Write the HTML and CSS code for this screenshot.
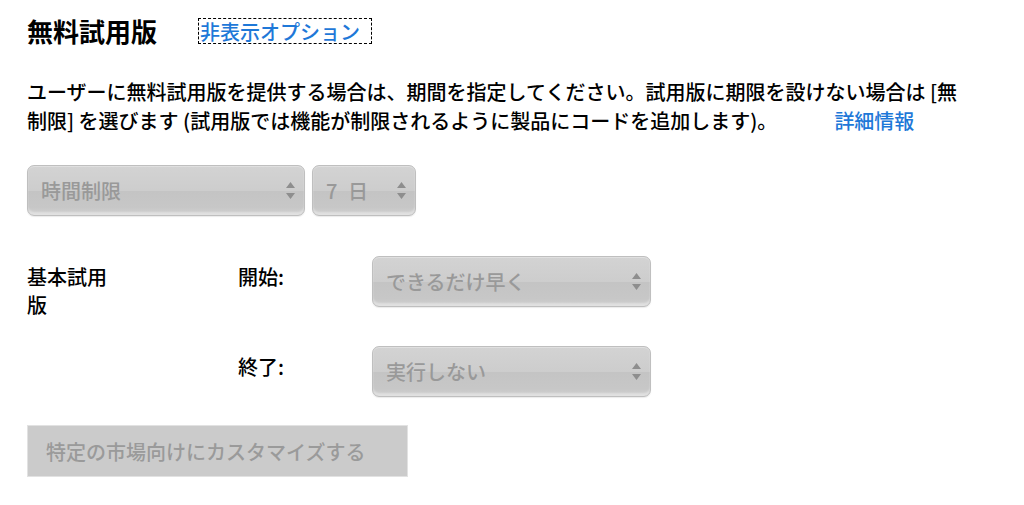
FILE: index.html
```html
<!DOCTYPE html>
<html lang="ja">
<head>
<meta charset="utf-8">
<link rel="stylesheet" href="styles.css">
</head>
<body>
<div class="page">
  <div class="header">
    <h1 class="title">無料試用版</h1>
    <a class="toggle" href="#">非表示オプション</a>
  </div>
  <p class="desc">ユーザーに無料試用版を提供する場合は、期間を指定してください。試用版に期限を設けない場合は [無制限] を選びます (試用版では機能が制限されるように製品にコードを追加します)。<a class="more" href="#">詳細情報</a></p>
  <div class="duration">
    <div class="select wide"><span>時間制限</span><svg class="arrows" viewBox="0 0 9 17" width="9" height="17"><path d="M4.5 0L9 6H0z M0 11h9L4.5 17z" fill="#8e8e8e"/></svg></div>
    <div class="select narrow"><span class="spaced">7 日</span><svg class="arrows" viewBox="0 0 9 17" width="9" height="17"><path d="M4.5 0L9 6H0z M0 11h9L4.5 17z" fill="#8e8e8e"/></svg></div>
  </div>
  <div class="schedule">
    <div class="label">基本試用版</div>
    <div class="sublabel">開始:</div>
    <div class="select field"><span>できるだけ早く</span><svg class="arrows" viewBox="0 0 9 17" width="9" height="17"><path d="M4.5 0L9 6H0z M0 11h9L4.5 17z" fill="#8e8e8e"/></svg></div>
    <div class="label"></div>
    <div class="sublabel">終了:</div>
    <div class="select field"><span>実行しない</span><svg class="arrows" viewBox="0 0 9 17" width="9" height="17"><path d="M4.5 0L9 6H0z M0 11h9L4.5 17z" fill="#8e8e8e"/></svg></div>
  </div>
  <div class="button">特定の市場向けにカスタマイズする</div>
</div>
</body>
</html>
```
FILE: styles.css
```css
html, body {
  margin: 0;
  padding: 0;
  background: #ffffff;
}
body {
  font-family: "Noto Sans CJK JP", "Noto Sans", sans-serif;
  color: #000;
}
.page {
  padding: 16px 0 0 27px;
}
.header {
  display: flex;
  align-items: center;
  height: 30px;
}
.title {
  margin: 0;
  font-size: 26px;
  font-weight: 700;
  line-height: 30px;
}
.toggle {
  margin-left: 41px;
  font-size: 20px;
  line-height: 23px;
  color: #1e78d8;
  text-decoration: none;
  border: 1px dashed #000;
  padding: 1px 11px 0 1px;
  font-weight: 500;
}
.desc {
  margin: 31px 0 0 0;
  width: 950px;
  font-size: 20px;
  line-height: 29px;
  font-weight: 500;
}
.more {
  margin-left: 57px;
  color: #1e78d8;
  text-decoration: none;
}
.duration {
  display: flex;
  gap: 7px;
  margin-top: 30px;
}
.select {
  box-sizing: border-box;
  height: 51px;
  display: flex;
  align-items: center;
  justify-content: space-between;
  padding: 0 9px 0 13px;
  border: 1px solid #bfbfbf;
  border-radius: 7px;
  background: linear-gradient(to bottom, #d3d3d3 0%, #cdcdcd 50%, #c4c4c4 52%, #c7c7c7 85%, #d2d2d2 100%);
  box-shadow: inset 0 -3px 2px rgba(255,255,255,0.35), inset 0 1px 0 rgba(255,255,255,0.3), 0 1px 1px rgba(0,0,0,0.08);
  color: #999999;
  font-size: 20px;
  font-weight: 500;
}
.select span {
  line-height: 24px;
}
.spaced {
  word-spacing: 6px;
}
.arrows {
  flex: none;
}
.wide {
  width: 278px;
}
.narrow {
  width: 104px;
}
.schedule {
  display: grid;
  grid-template-columns: 211px 134px 279px;
  grid-auto-rows: 50px;
  row-gap: 40px;
  margin-top: 40px;
}
.label, .sublabel {
  font-size: 20px;
  line-height: 28px;
  font-weight: 500;
  padding-top: 7px;
}
.label {
  width: 86px;
}
.field {
  width: 279px;
  height: 51px;
}
.button {
  box-sizing: border-box;
  margin-top: 29px;
  width: 381px;
  height: 52px;
  padding-left: 18px;
  display: flex;
  align-items: center;
  background: #cbcbcb;
  border: 1px solid #e2e2e2;
  color: #9a9a9a;
  font-size: 20px;
  font-weight: 500;
}
```
